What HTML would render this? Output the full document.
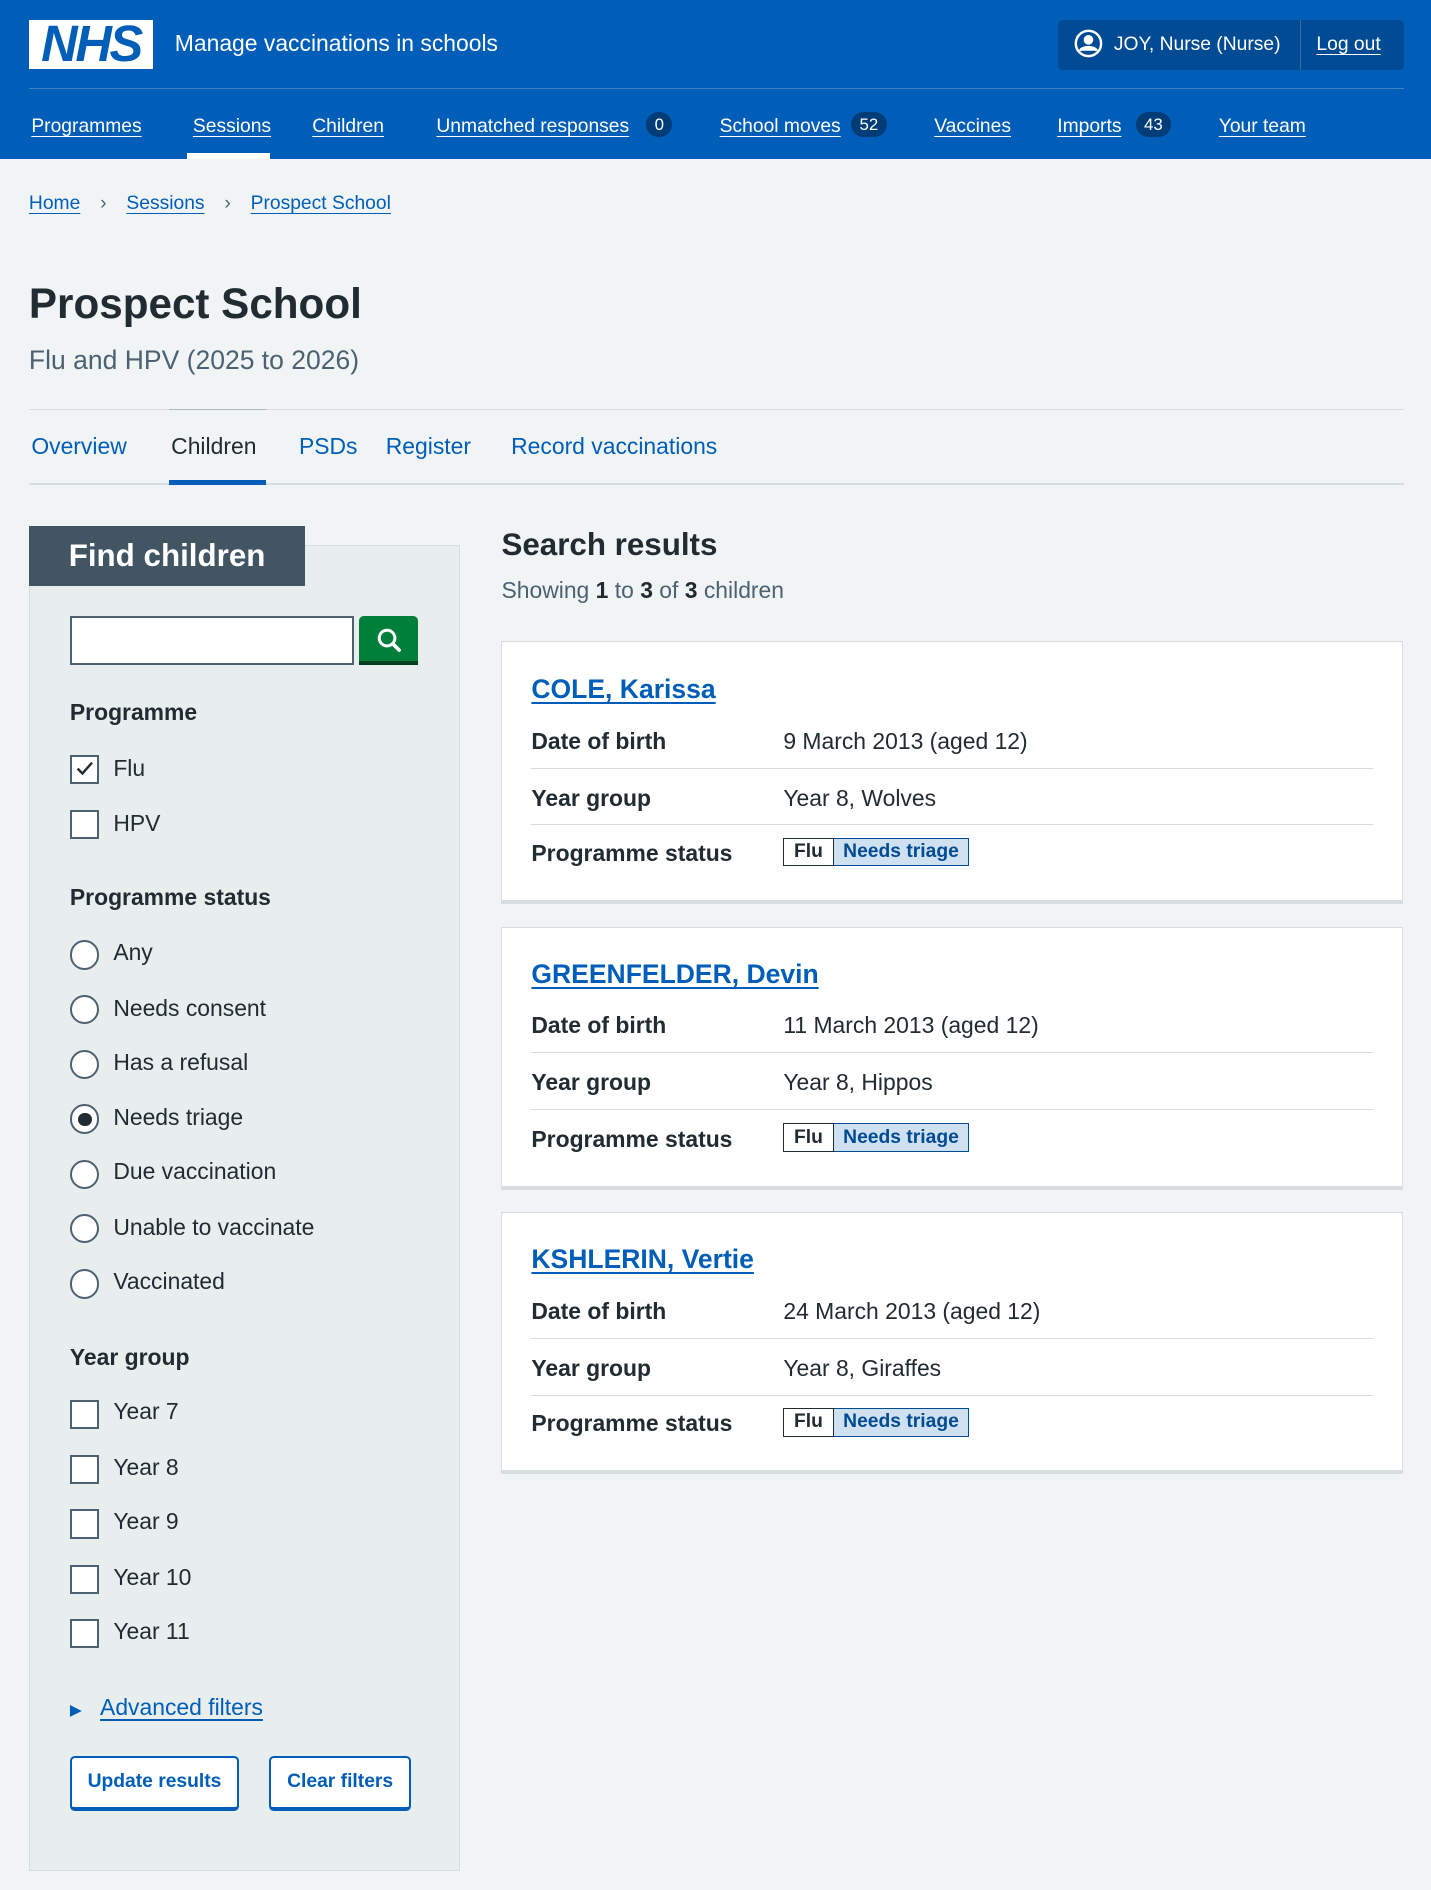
<!DOCTYPE html>
<html><head><meta charset="utf-8"><style>
html{zoom:1.2055}
body{margin:0;background:#f0f4f5;font-family:"Liberation Sans",Arial,sans-serif;color:#212b32;width:1187px;height:1568px;position:relative;overflow:hidden}
a{color:#005eb8;text-decoration:underline;text-underline-offset:3px}
.hdr{background:#005eb8;height:132px;position:relative;color:#fff}
.abs{position:absolute}
.logo{left:24px;top:17px;width:103px;height:40px;background:#fff;color:#005eb8;font:italic bold 42px/40px "Liberation Sans",sans-serif;text-align:center;letter-spacing:-2px}
.nav a{position:absolute;top:96px;color:#fff;font-size:16px}
.badge{display:inline-block;background:#003d78;border-radius:12px;padding:2px 7px;font-size:14px;margin-left:6px;text-decoration:none;color:#fff}
.tabs a{position:absolute;top:359px;font-size:19px;text-decoration:none}
.panel{left:24px;top:452px;width:356px;height:1098px;background:#e8edee;border:1px solid #d8dde0}
.lbl{position:absolute;left:58px;font-size:19px}
.h{font-weight:bold}
.cb{position:absolute;left:58px;width:21px;height:21px;border:2px solid #4c6272;background:#fff}
.rd{position:absolute;left:58px;width:21px;height:21px;border:2px solid #4c6272;border-radius:50%;background:#fff}
.card{position:absolute;left:416px;width:746px;height:214px;background:#fff;border:1px solid #d8dde0;border-bottom:4px solid #d8dde0}
.card .nm{position:absolute;left:24px;top:26px;font-size:22px;font-weight:bold}
.row{position:absolute;left:24px;width:698px;height:33px;font-size:19px}
.row .k{position:absolute;left:0;top:0;font-weight:bold}
.row .v{position:absolute;left:209px;top:0}
.line{border-bottom:1px solid #d8dde0}
.tag{position:absolute;left:209px;top:-2px;display:flex;font-size:16px;font-weight:bold}
.tag span{border:1px solid #212b32;padding:2px 8px;background:#fff}
.tag span+span{border-color:#004b93;background:#cfe0f0;color:#004b93;border-left:none}
.btn{position:absolute;top:1457px;height:40px;border:2px solid #005eb8;border-bottom:4px solid #005eb8;border-radius:4px;background:#fff;color:#005eb8;font-weight:bold;font-size:16px;line-height:40px;text-align:center}
</style></head><body>
<div class="hdr">
<div class="abs logo">NHS</div>
<div class="abs" style="left:145px;top:25px;font-size:19px">Manage vaccinations in schools</div>
<div class="abs" style="left:878px;top:17px;width:287px;height:41px;background:#004b93;border-radius:4px"></div>
<div class="abs" style="left:1078px;top:17px;width:1px;height:41px;background:#2c6eb0"></div>
<svg class="abs" style="left:891px;top:24px" width="24" height="24" viewBox="0 0 24 24"><circle cx="12" cy="12" r="10.5" fill="none" stroke="#fff" stroke-width="2"/><circle cx="12" cy="9" r="4" fill="#fff"/><path d="M5 18c2-4 12-4 14 0" fill="#fff" stroke="#fff" stroke-width="2"/></svg>
<div class="abs" style="left:924px;top:28px;font-size:16px">JOY, Nurse (Nurse)</div>
<a class="abs" style="left:1092px;top:28px;font-size:16px;color:#fff">Log out</a>
<div class="abs" style="left:24px;top:73px;width:1141px;height:1px;background:#3f81c6"></div>
<div class="nav">
<a style="left:26px">Programmes</a>
<a style="left:160px">Sessions</a>
<a style="left:259px">Children</a>
<a style="left:362px">Unmatched responses</a><span class="badge abs" style="left:530px;top:93px">0</span>
<a style="left:597px">School moves</a><span class="badge abs" style="left:700px;top:93px">52</span>
<a style="left:775px">Vaccines</a>
<a style="left:877px">Imports</a><span class="badge abs" style="left:936px;top:93px">43</span>
<a style="left:1011px">Your team</a>
</div>
<div class="abs" style="left:155px;top:127px;width:69px;height:5px;background:#fff"></div>
</div>
<div class="abs" style="left:24px;top:160px;font-size:16px"><a>Home</a> <span style="margin:0 12px;color:#4c6272">›</span> <a>Sessions</a> <span style="margin:0 12px;color:#4c6272">›</span> <a>Prospect School</a></div>
<div class="abs" style="left:24px;top:232px;font-size:35px;font-weight:bold">Prospect School</div>
<div class="abs" style="left:24px;top:286px;font-size:22px;color:#4c6272">Flu and HPV (2025 to 2026)</div>
<div class="abs" style="left:24px;top:339px;width:1141px;height:1px;background:#d8dde0"></div>
<div class="abs" style="left:24px;top:401px;width:1141px;height:1px;background:#d8dde0"></div>
<div class="abs" style="left:140px;top:339px;width:81px;height:1px;background:#aeb7bd"></div>
<div class="tabs">
<a style="left:26px">Overview</a>
<a style="left:142px;color:#212b32">Children</a>
<a style="left:248px">PSDs</a>
<a style="left:320px">Register</a>
<a style="left:424px">Record vaccinations</a>
</div>
<div class="abs" style="left:140px;top:398px;width:81px;height:4px;background:#005eb8"></div>

<div class="abs panel"></div>
<div class="abs" style="left:24px;top:436px;width:229px;height:50px;background:#425563;color:#fff;font-size:26px;font-weight:bold;line-height:50px;box-sizing:border-box;padding-left:33px">Find children</div>
<div class="abs" style="left:58px;top:511px;width:232px;height:37px;border:2px solid #4c6272;background:#fff"></div>
<div class="abs" style="left:298px;top:511px;width:49px;height:37px;background:#007f3b;border-bottom:4px solid #00401e;border-radius:4px 4px 0 0"></div>
<svg class="abs" style="left:311px;top:519px" width="24" height="24" viewBox="0 0 24 24"><circle cx="10" cy="10" r="6.5" fill="none" stroke="#fff" stroke-width="2.5"/><path d="M15 15l5 5" stroke="#fff" stroke-width="3" stroke-linecap="round"/></svg>

<div class="lbl h" style="top:580px">Programme</div>
<div class="cb" style="top:626px"></div><svg class="abs" style="left:61px;top:630px" width="18" height="16"><path d="M3 8l4 4 8-9" fill="none" stroke="#212b32" stroke-width="2"/></svg>
<div class="lbl" style="left:94px;top:626px">Flu</div>
<div class="cb" style="top:672px"></div><div class="lbl" style="left:94px;top:672px">HPV</div>

<div class="lbl h" style="top:733px">Programme status</div>
<div class="rd" style="top:780px"></div><div class="lbl" style="left:94px;top:779px">Any</div>
<div class="rd" style="top:825px"></div><div class="lbl" style="left:94px;top:825px">Needs consent</div>
<div class="rd" style="top:871px"></div><div class="lbl" style="left:94px;top:870px">Has a refusal</div>
<div class="rd" style="top:916px"></div><div class="abs" style="left:65px;top:923px;width:11px;height:11px;border-radius:50%;background:#212b32"></div><div class="lbl" style="left:94px;top:916px">Needs triage</div>
<div class="rd" style="top:962px"></div><div class="lbl" style="left:94px;top:961px">Due vaccination</div>
<div class="rd" style="top:1007px"></div><div class="lbl" style="left:94px;top:1007px">Unable to vaccinate</div>
<div class="rd" style="top:1053px"></div><div class="lbl" style="left:94px;top:1052px">Vaccinated</div>

<div class="lbl h" style="top:1115px">Year group</div>
<div class="cb" style="top:1161px"></div><div class="lbl" style="left:94px;top:1160px">Year 7</div>
<div class="cb" style="top:1207px"></div><div class="lbl" style="left:94px;top:1206px">Year 8</div>
<div class="cb" style="top:1252px"></div><div class="lbl" style="left:94px;top:1251px">Year 9</div>
<div class="cb" style="top:1298px"></div><div class="lbl" style="left:94px;top:1297px">Year 10</div>
<div class="cb" style="top:1343px"></div><div class="lbl" style="left:94px;top:1342px">Year 11</div>
<div class="abs" style="left:58px;top:1410px;color:#005eb8;font-size:13px">▶</div>
<a class="abs" style="left:83px;top:1405px;font-size:19px">Advanced filters</a>
<div class="btn" style="left:58px;width:137px">Update results</div>
<div class="btn" style="left:223px;width:115px">Clear filters</div>

<div class="abs" style="left:416px;top:437px;font-size:26px;font-weight:bold">Search results</div>
<div class="abs" style="left:416px;top:479px;font-size:19px;color:#4c6272">Showing <b style="color:#212b32">1</b> to <b style="color:#212b32">3</b> of <b style="color:#212b32">3</b> children</div>

<div class="card" style="top:532px"><a class="nm">COLE, Karissa</a>
<div class="row line" style="top:71px"><span class="k">Date of birth</span><span class="v">9 March 2013 (aged 12)</span></div>
<div class="row line" style="top:118px"><span class="k">Year group</span><span class="v">Year 8, Wolves</span></div>
<div class="row" style="top:164px"><span class="k">Programme status</span><div class="tag"><span>Flu</span><span>Needs triage</span></div></div></div>

<div class="card" style="top:769px"><a class="nm">GREENFELDER, Devin</a>
<div class="row line" style="top:70px"><span class="k">Date of birth</span><span class="v">11 March 2013 (aged 12)</span></div>
<div class="row line" style="top:117px"><span class="k">Year group</span><span class="v">Year 8, Hippos</span></div>
<div class="row" style="top:164px"><span class="k">Programme status</span><div class="tag"><span>Flu</span><span>Needs triage</span></div></div></div>

<div class="card" style="top:1005px"><a class="nm">KSHLERIN, Vertie</a>
<div class="row line" style="top:71px"><span class="k">Date of birth</span><span class="v">24 March 2013 (aged 12)</span></div>
<div class="row line" style="top:118px"><span class="k">Year group</span><span class="v">Year 8, Giraffes</span></div>
<div class="row" style="top:164px"><span class="k">Programme status</span><div class="tag"><span>Flu</span><span>Needs triage</span></div></div></div>
</body></html>
